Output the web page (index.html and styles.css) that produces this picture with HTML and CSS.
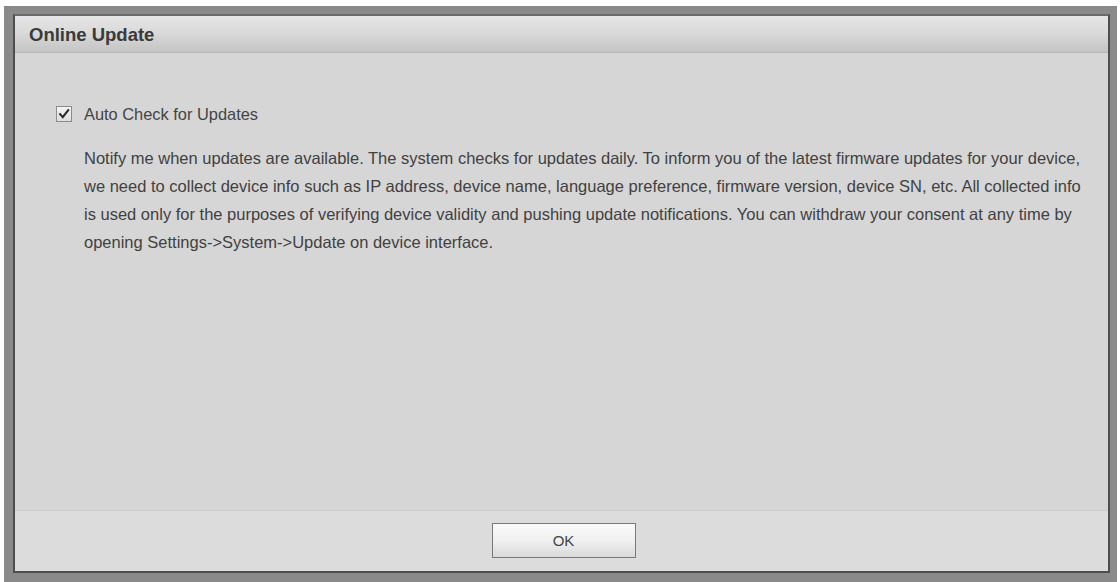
FILE: index.html
```html
<!DOCTYPE html>
<html lang="en">
<head>
<meta charset="utf-8">
<title>Online Update</title>
<link rel="stylesheet" href="styles.css">
</head>
<body>
<div class="frame">
  <div class="dialog">
    <div class="dialog-header">Online Update</div>
    <div class="dialog-body">
      <label class="check-row">
        <span class="checkbox">
          <svg viewBox="0 0 16 16" width="16" height="16" aria-hidden="true">
            <path d="M3.5 8.2 L6.6 11.6 L12.8 3.6" fill="none" stroke="#2a2a2a" stroke-width="2.4" stroke-linecap="square" stroke-linejoin="miter"/>
          </svg>
        </span>
        <span class="check-label">Auto Check for Updates</span>
      </label>
      <p class="notice">Notify me when updates are available. The system checks for updates daily. To inform you of the latest firmware updates for your device, we need to collect device info such as IP address, device name, language preference, firmware version, device SN, etc. All collected info is used only for the purposes of verifying device validity and pushing update notifications. You can withdraw your consent at any time by opening Settings-&gt;System-&gt;Update on device interface.</p>
    </div>
    <div class="dialog-footer">
      <button class="btn" type="button">OK</button>
    </div>
  </div>
</div>
</body>
</html>
```

FILE: styles.css
```css
html, body {
  margin: 0;
  height: 100%;
  background: #ffffff;
}

body {
  padding: 6px 3px 0 4px;
  box-sizing: border-box;
  font-family: "Liberation Sans", Arial, sans-serif;
  color: #3f3f3f;
  overflow: hidden;
}

.frame {
  background: #8a8a8a;
  padding: 8px 7px 9px 9px;
  height: 100%;
  box-sizing: border-box;
}

.dialog {
  display: flex;
  flex-direction: column;
  height: 100%;
  box-sizing: border-box;
  border: 2px solid #4e4e4e;
  border-top-color: #6a6a6a;
  background: #d6d6d6;
}

.dialog-header {
  height: 37px;
  box-sizing: border-box;
  padding: 1px 0 0 14px;
  display: flex;
  align-items: center;
  font-size: 18.5px;
  font-weight: bold;
  color: #3a3a3a;
  background: linear-gradient(to bottom, #e6e6e6 0%, #dadada 45%, #c4c4c4 100%);
  border-bottom: 1px solid #b6b6b6;
}

.dialog-body {
  flex: 1;
  padding: 53px 23px 0 41px;
  background: #d6d6d6;
}

.check-row {
  display: flex;
  align-items: center;
  gap: 12px;
  height: 16px;
}

.checkbox {
  width: 16px;
  height: 16px;
  box-sizing: border-box;
  border: 1px solid #8c8c8c;
  background: linear-gradient(to bottom, #f4f4f4, #dedede);
  display: flex;
  align-items: center;
  justify-content: center;
}

.checkbox svg {
  display: block;
}

.check-label {
  font-size: 16.4px;
  color: #444444;
}

.notice {
  margin: 22px 0 0 28px;
  font-size: 16.5px;
  line-height: 28px;
  color: #414141;
}

.dialog-footer {
  height: 61px;
  box-sizing: border-box;
  border-top: 1px solid #cbcbcb;
  background: #dcdcdc;
  display: flex;
  align-items: center;
  justify-content: center;
  padding: 0 0 1px 4px;
}

.btn {
  width: 144px;
  height: 35px;
  border: 1px solid #7a7a7a;
  background: linear-gradient(to bottom, #fbfbfb 0%, #f0f0f0 50%, #dadada 100%);
  font-family: "Liberation Sans", Arial, sans-serif;
  font-size: 15px;
  color: #444444;
  padding: 0;
}
```
